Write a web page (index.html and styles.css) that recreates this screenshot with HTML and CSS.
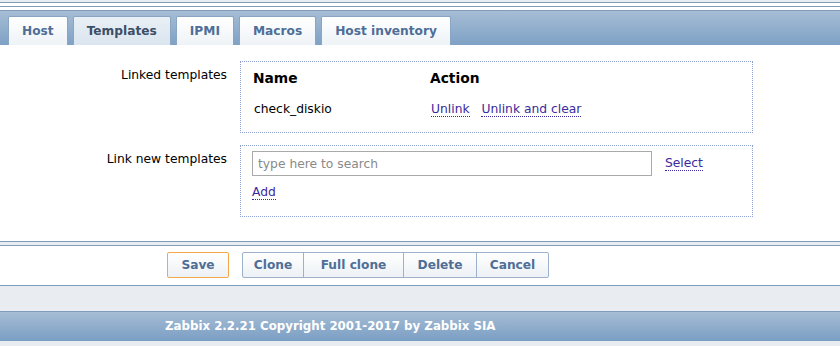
FILE: index.html
```html
<!DOCTYPE html>
<html lang="en">
<head>
    <meta charset="UTF-8">
    <title>Host templates</title>
    <link rel="stylesheet" href="styles.css">
</head>
<body>
    <div class="top-rule"></div>
    <div class="frame">
        <!-- Tabs -->
        <div class="tabbar">
            <a class="tab">Host</a>
            <a class="tab active">Templates</a>
            <a class="tab">IPMI</a>
            <a class="tab">Macros</a>
            <a class="tab">Host inventory</a>
        </div>

        <!-- Form -->
        <div class="form">
            <div class="form-row">
                <div class="form-label">Linked templates</div>
                <div class="form-box linked">
                    <table>
                        <tr>
                            <th class="col-name">Name</th>
                            <th>Action</th>
                        </tr>
                        <tr>
                            <td>check_diskio</td>
                            <td>
                                <a class="link">Unlink</a>
                                <a class="link">Unlink and clear</a>
                            </td>
                        </tr>
                    </table>
                </div>
            </div>
            <div class="form-row">
                <div class="form-label">Link new templates</div>
                <div class="form-box new">
                    <div class="search-line">
                        <input type="text" class="search" placeholder="type here to search">
                        <a class="link">Select</a>
                    </div>
                    <a class="link">Add</a>
                </div>
            </div>
        </div>
    </div>

    <div class="buttons">
        <button class="btn save">Save</button>
        <div class="btn-group">
            <button class="btn clone">Clone</button>
            <button class="btn full-clone">Full clone</button>
            <button class="btn delete">Delete</button>
            <button class="btn cancel">Cancel</button>
        </div>
    </div>

    <div class="footer">Zabbix 2.2.21 Copyright 2001-2017 by Zabbix SIA</div>
</body>
</html>
```

FILE: styles.css
```css
body {
    margin: 0;
    background-color: #e9edf1;
    font-family: "DejaVu Sans", Verdana, sans-serif;
    font-size: 12.3px;
    color: #000;
}

.top-rule {
    margin-top: 2px;
    height: 3px;
    background-color: #ffffff;
    border-top: 1px solid #7f9cbb;
    border-bottom: 1px solid #7f9cbb;
}

.frame {
    background-color: #ffffff;
    padding-top: 3px;
    border-bottom: 1px solid #7f9cbb;
}

.tabbar {
    display: flex;
    gap: 5px;
    height: 29px;
    padding: 5px 0 0 8px;
    border-top: 1px solid #7f9cbb;
    background: linear-gradient(#a6bdd5, #7ea1c5);
}

.tab {
    display: flex;
    align-items: center;
    padding: 0 13px;
    font-weight: bold;
    font-size: 12.2px;
    color: #4e6e97;
    background: linear-gradient(#ffffff, #eef3f7);
    border: 1px solid #8aa5c2;
    border-bottom: none;
    border-radius: 2px 2px 0 0;
}

.tab.active {
    color: #3b4e66;
    background: linear-gradient(#e9eff5, #dbe5ef);
}

.form {
    display: flex;
    flex-direction: column;
    gap: 12px;
    padding: 16px 0 24px;
}

.form-row {
    display: flex;
    gap: 13px;
}

.form-label {
    width: 227px;
    text-align: right;
    padding-top: 7px;
}

.form-box {
    width: 511px;
    border: 1px dotted #8ea1d1;
}

.linked {
    height: 70px;
}

.linked table {
    border-collapse: collapse;
    margin: 2px 0 0 12px;
}

.linked th {
    text-align: left;
    font-size: 13.8px;
    padding: 3px 0 0;
    height: 22px;
}

.linked td {
    padding-top: 11px;
    height: 18px;
}

.linked .col-name {
    width: 177px;
}

.link {
    color: #3b2a9e;
    border-bottom: 1px dotted #3b2a9e;
    margin-right: 8px;
}

.new {
    padding: 5px 0 0 11px;
    box-sizing: border-box;
    height: 72px;
    width: 513px;
}

.search-line {
    display: flex;
    align-items: center;
    gap: 13px;
    margin-bottom: 9px;
}

.search {
    width: 400px;
    height: 25px;
    box-sizing: border-box;
    border: 1px solid #a9a9a9;
    padding: 0 5px;
    font-family: "DejaVu Sans", Verdana, sans-serif;
    font-size: 12.3px;
}

.search::placeholder {
    color: #8a8a8a;
}

.buttons {
    display: flex;
    gap: 13px;
    padding: 6px 0 7px 167px;
    margin-top: 3px;
    background-color: #ffffff;
    border-top: 1px solid #7f9cbb;
    border-bottom: 1px solid #7f9cbb;
}

.btn {
    height: 26px;
    padding: 0;
    font-family: "DejaVu Sans", Verdana, sans-serif;
    font-size: 12.2px;
    font-weight: bold;
    color: #4e6e97;
    background: linear-gradient(#ffffff, #edf1f5);
    border: 1px solid #9db2ca;
    border-radius: 2px;
}

.btn.save {
    border-color: #f3a94a;
    width: 62px;
}

.btn-group {
    display: flex;
}

.btn-group .btn {
    border-radius: 0;
    margin-left: -1px;
}

.btn-group .btn:first-child {
    margin-left: 0;
    border-radius: 2px 0 0 2px;
}

.btn-group .btn:last-child {
    border-radius: 0 2px 2px 0;
}

.btn.clone { width: 62px; }
.btn.full-clone { width: 101px; }
.btn.delete { width: 74px; }
.btn.cancel { width: 73px; }

.footer {
    margin-top: 25px;
    height: 29px;
    line-height: 29px;
    padding-left: 165px;
    font-weight: bold;
    font-size: 11.8px;
    color: #ffffff;
    border-top: 1px solid #7f9cbb;
    background: linear-gradient(#a6bdd5, #7a9ec3);
}
```
